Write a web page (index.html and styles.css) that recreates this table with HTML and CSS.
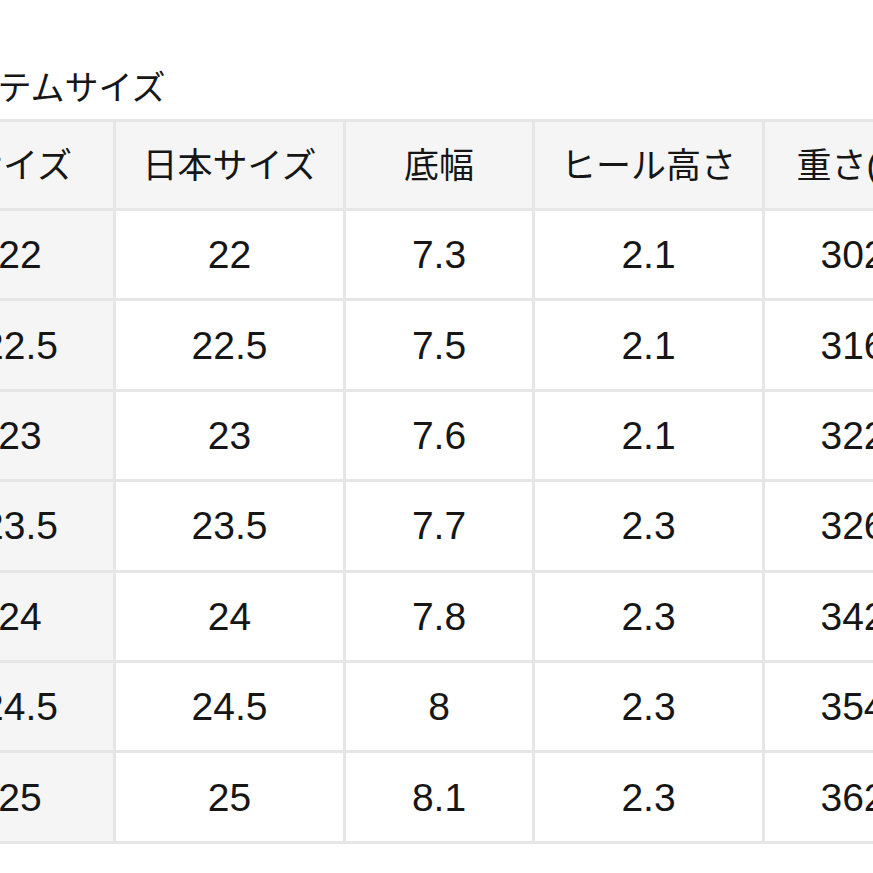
FILE: index.html
```html
<!DOCTYPE html>
<html lang="ja">
<head>
<meta charset="utf-8">
<title>アイテムサイズ</title>
<link rel="stylesheet" href="styles.css">
</head>
<body>
<div class="page">
  <h2 class="title">アイテムサイズ</h2>
  <div class="size-table" role="table">
    <div class="cell head">サイズ</div>
    <div class="cell head">日本サイズ</div>
    <div class="cell head">底幅</div>
    <div class="cell head">ヒール高さ</div>
    <div class="cell head">重さ(g)</div>

    <div class="cell side">22</div><div class="cell">22</div><div class="cell">7.3</div><div class="cell">2.1</div><div class="cell">302</div>
    <div class="cell side">22.5</div><div class="cell">22.5</div><div class="cell">7.5</div><div class="cell">2.1</div><div class="cell">316</div>
    <div class="cell side">23</div><div class="cell">23</div><div class="cell">7.6</div><div class="cell">2.1</div><div class="cell">322</div>
    <div class="cell side">23.5</div><div class="cell">23.5</div><div class="cell">7.7</div><div class="cell">2.3</div><div class="cell">326</div>
    <div class="cell side">24</div><div class="cell">24</div><div class="cell">7.8</div><div class="cell">2.3</div><div class="cell">342</div>
    <div class="cell side">24.5</div><div class="cell">24.5</div><div class="cell">8</div><div class="cell">2.3</div><div class="cell">354</div>
    <div class="cell side">25</div><div class="cell">25</div><div class="cell">8.1</div><div class="cell">2.3</div><div class="cell">362</div>
  </div>
</div>
</body>
</html>
```

FILE: styles.css
```css
html, body {
  margin: 0;
  padding: 0;
  background: #ffffff;
  overflow: hidden;
}

body {
  width: 873px;
  height: 873px;
  font-family: "Liberation Sans", "Noto Sans CJK JP", sans-serif;
  color: #161616;
}

.page {
  margin-left: -76px;
  width: max-content;
}

.title {
  margin: 62px 0 0 0;
  padding-left: 8px;
  font-family: "Noto Sans CJK JP", sans-serif;
  font-weight: 400;
  font-size: 34px;
  line-height: 48px;
  color: #161616;
}

.size-table {
  margin-top: 9px;
  display: grid;
  grid-template-columns: 186px 227px 186px 227px 176px;
  grid-template-rows: 86px repeat(7, 87.4px);
  gap: 3px;
  padding: 3px;
  background: #e6e6e6;
}

.cell {
  display: flex;
  align-items: center;
  justify-content: center;
  background: #ffffff;
  font-size: 39px;
  line-height: 1;
  white-space: nowrap;
}

.head {
  background: #f5f5f5;
  font-size: 35px;
}

.side {
  background: #f5f5f5;
}
```
